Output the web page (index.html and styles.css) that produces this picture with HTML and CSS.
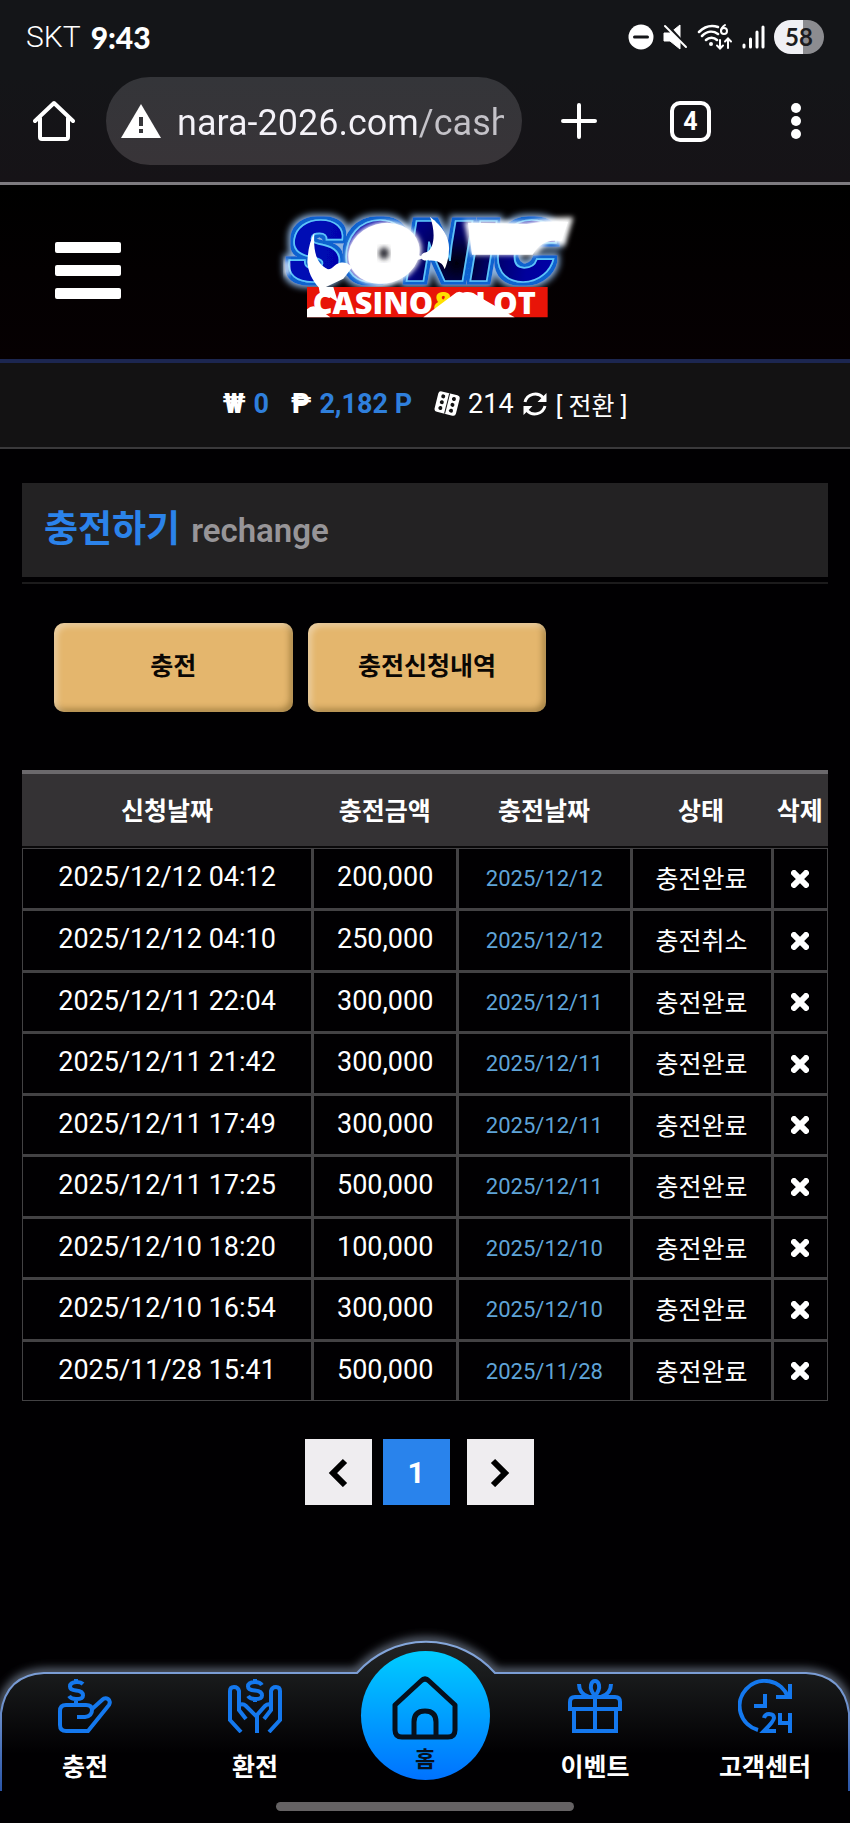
FILE: index.html
```html
<!DOCTYPE html>
<html lang="ko">
<head>
    <meta charset="UTF-8">
    <meta name="viewport" content="width=device-width, initial-scale=1.0">
    <title>충전하기</title>
    <link rel="stylesheet" href="styles.css">
</head>
<body>
    <!-- reusable icons -->
    <svg class="sprite" aria-hidden="true">
        <symbol id="icon-x" viewBox="0 0 18 18">
            <path d="M2 2l14 14M16 2L2 16" stroke="#fff" stroke-width="5"/>
            <path d="M3 3l12 12M15 3L3 15" stroke="#fff" stroke-width="6" stroke-linecap="round"/>
        </symbol>
    </svg>

    <div class="status-bar">
        <span class="carrier">SKT</span>
        <span class="clock">9:43</span>
        <div class="status-icons">
            <svg width="26" height="26" viewBox="0 0 26 26">
                <circle cx="13" cy="13" r="12.500" fill="#fff"/>
                <path d="M6.500 13h13" stroke="#141518" stroke-width="3" stroke-linecap="round"/>
            </svg>
            <svg width="25" height="26" viewBox="0 0 25 26">
                <path d="M1 9h6L17 1v24L7 17H1z" fill="#fff" stroke="#fff" stroke-linejoin="round"/>
                <path d="M4 1l20 22" stroke="#141518" stroke-width="3"/>
                <path d="M2 2l21 21" stroke="#fff" stroke-width="2" stroke-linecap="round"/>
            </svg>
            <svg width="36" height="28" viewBox="0 0 36 28">
                <g fill="none" stroke="#fff" stroke-width="2.500" stroke-linecap="round">
                    <path d="M2 9C8 3 15 2 21 4M5 13c5-5 11-5.500 16-2M9 17c3-3 8-3 11 0"/>
                    <path d="M23 17v8M20 22.500l3 3 3-3M31 25v-9M28 18.500l3-3 3 3" stroke-width="2"/>
                    <path d="M28 2c-3 2-4 4-4 6" stroke-width="2"/>
                    <circle cx="27" cy="8" r="3" stroke-width="2"/>
                </g>
                <circle cx="14" cy="21" r="2" fill="#fff"/>
            </svg>
            <svg width="23" height="24" viewBox="0 0 23 24">
                <path d="M2 20v2M8.500 14v8M15 7v15M21 2v20" stroke="#fff" stroke-width="3" stroke-linecap="round"/>
            </svg>
            <span class="battery">58</span>
        </div>
    </div>

    <div class="browser-bar">
        <button class="bar-btn" aria-label="Home">
            <svg width="42" height="42" viewBox="0 0 42 42">
                <path d="M2 21L21 3l19 18M7 18v19q0 2 2 2h24q2 0 2-2V18" fill="none" stroke="#fff" stroke-width="4" stroke-linejoin="round" stroke-linecap="round"/>
            </svg>
        </button>
        <div class="url-pill">
            <svg width="42" height="36" viewBox="0 0 42 36">
                <path d="M21 1l20 34H1z" fill="#fff"/>
                <path d="M21 14v9M21 26v4" stroke="#36363a" stroke-width="4"/>
            </svg>
            <input type="text" class="url-text" value="nara-2026.com/cash" aria-label="Address">
        </div>
        <button class="bar-btn" aria-label="New tab">
            <svg width="36" height="36" viewBox="0 0 36 36">
                <path d="M18 2v32M2 18h32" stroke="#fff" stroke-width="4" stroke-linecap="round"/>
            </svg>
        </button>
        <button class="bar-btn tabs-btn" aria-label="Tabs"><span class="tab-count">4</span></button>
        <button class="bar-btn" aria-label="Menu">
            <svg width="10" height="38" viewBox="0 0 10 38">
                <circle cx="5" cy="6" r="5" fill="#fff"/>
                <circle cx="5" cy="19" r="5" fill="#fff"/>
                <circle cx="5" cy="32" r="5" fill="#fff"/>
            </svg>
        </button>
    </div>

    <header class="site-header">
        <button class="menu-toggle" aria-label="메뉴">
            <span></span>
            <span></span>
            <span></span>
        </button>
        <a href="#" class="logo" aria-label="Sonic Casino &amp; Slot">
            <svg width="340" height="130" viewBox="-15 0 1020 390">
                <defs>
                    <radialGradient id="navy" gradientUnits="userSpaceOnUse" cx="590" cy="190" r="420">
                        <stop offset="0" stop-color="#00000c"/>
                        <stop offset="0.2" stop-color="#00005c"/>
                        <stop offset="0.5" stop-color="#00009c"/>
                        <stop offset="1" stop-color="#0008b4"/>
                    </radialGradient>
                    <filter id="soft" x="-15%" y="-25%" width="130%" height="150%"><feGaussianBlur stdDeviation="8"/></filter>
                    <!-- blue outline with a pale halo behind the word -->
                    <filter id="neon" x="-10%" y="-30%" width="120%" height="160%">
                        <feMorphology in="SourceAlpha" operator="dilate" radius="10" result="wide"/>
                        <feFlood flood-color="#0c62cf"/>
                        <feComposite in2="wide" operator="in" result="outline"/>
                        <feMorphology in="SourceAlpha" operator="dilate" radius="14" result="wider"/>
                        <feFlood flood-color="#8db4e0"/>
                        <feComposite in2="wider" operator="in"/>
                        <feGaussianBlur stdDeviation="10" result="halo"/>
                        <feMerge>
                            <feMergeNode in="halo"/>
                            <feMergeNode in="outline"/>
                            <feMergeNode in="SourceGraphic"/>
                        </feMerge>
                    </filter>
                </defs>
                <text class="logo-word" x="82" y="243" fill="url(#navy)" stroke="#5cc4fa" stroke-width="5" filter="url(#neon)">SONIC</text>
                <path d="M74 180l14 2v42l-14 2z" fill="#fff" filter="url(#soft)"/>
                <g fill="#fff">
                    <path d="M163 98C160 150 166 190 204 208C222 206 222 192 240 188C262 184 268 196 278 200L250 236L196 262H176C156 240 144 214 142 186C144 150 150 120 163 98z"/>
                    <g filter="url(#soft)"><ellipse cx="372" cy="160" rx="114" ry="94" transform="rotate(-16 372 160)"/></g>
                    <ellipse cx="372" cy="160" rx="108" ry="90" transform="rotate(-16 372 160)"/>
                    <path d="M465 160l18 8c4-10 14-12 22-12l6 20c-10 8-22 6-26 0l-20 6z"/>
                    <path d="M510 50C556 86 572 120 566 160C564 184 558 198 554 208C548 188 532 180 506 182L498 158C526 146 526 90 510 50z"/>
                    <path d="M612 62L800 66Q860 52 940 52L914 138L872 126Q846 134 830 164H634z" filter="url(#soft)"/>
                    <path d="M624 68L800 72Q860 62 924 66L904 124Q850 112 818 164H636z"/>
                </g>
                <ellipse cx="372" cy="160" rx="15" ry="18" fill="#33333a" filter="url(#soft)"/>
                <path d="M141 261H863V352H141z" fill="#e81408"/>
                <text class="logo-tag" x="158" y="341" fill="#fff">CASINO<tspan fill="#ffe000">&amp;</tspan>SLOT</text>
                <g fill="#fff">
                    <path d="M176 261h44l14 46-30-20-22 6z"/>
                    <path d="M141 352v-24q12-12 26-8l44 32z"/>
                    <path d="M490 352L580 284q18-18 36 0l28-2 34 20 86 50z"/>
                </g>
            </svg>
        </a>
    </header>

    <div class="balance">
        <span class="won">₩</span>
        <span class="amount">0</span>
        <span class="peso">₱</span>
        <span class="amount">2,182 P</span>
        <svg class="dice" width="26" height="26" viewBox="0 0 26 26">
            <g transform="rotate(14 13 13)">
                <rect x="2" y="2" width="22" height="21" rx="3" fill="#fff"/>
                <path d="M13 2v21" stroke="#131213"/>
                <g fill="#131213">
                    <circle cx="7.500" cy="6.500" r="2"/><circle cx="7.500" cy="12.500" r="2"/><circle cx="7.500" cy="18.500" r="2"/>
                    <circle cx="18.500" cy="6.500" r="2"/><circle cx="18.500" cy="12.500" r="2"/><circle cx="18.500" cy="18.500" r="2"/>
                </g>
            </g>
        </svg>
        <span>214</span>
        <svg width="26" height="26" viewBox="0 0 26 26">
            <g fill="none" stroke="#fff" stroke-width="3">
                <path d="M3 11A10.500 10.500 0 0 1 21 6.500M23 15A10.500 10.500 0 0 1 5 19.500"/>
            </g>
            <path d="M24.500 2v9h-9zM1.500 24v-9h9z" fill="#fff"/>
        </svg>
        <a href="#" class="convert">[ 전환 ]</a>
    </div>

    <main class="content">
        <h1 class="page-title">충전하기 <small>rechange</small></h1>

        <div class="actions">
            <button>충전</button>
            <button>충전신청내역</button>
        </div>

        <table class="history">
            <colgroup>
                <col class="col-requested">
                <col class="col-amount">
                <col class="col-date">
                <col class="col-status">
                <col class="col-delete">
            </colgroup>
            <thead>
                <tr><th>신청날짜</th><th>충전금액</th><th>충전날짜</th><th>상태</th><th>삭제</th></tr>
            </thead>
            <tbody>
                <tr><td>2025/12/12 04:12</td><td>200,000</td><td class="date">2025/12/12</td><td>충전완료</td><td><button aria-label="삭제"><svg><use href="#icon-x"/></svg></button></td></tr>
                <tr><td>2025/12/12 04:10</td><td>250,000</td><td class="date">2025/12/12</td><td>충전취소</td><td><button aria-label="삭제"><svg><use href="#icon-x"/></svg></button></td></tr>
                <tr><td>2025/12/11 22:04</td><td>300,000</td><td class="date">2025/12/11</td><td>충전완료</td><td><button aria-label="삭제"><svg><use href="#icon-x"/></svg></button></td></tr>
                <tr><td>2025/12/11 21:42</td><td>300,000</td><td class="date">2025/12/11</td><td>충전완료</td><td><button aria-label="삭제"><svg><use href="#icon-x"/></svg></button></td></tr>
                <tr><td>2025/12/11 17:49</td><td>300,000</td><td class="date">2025/12/11</td><td>충전완료</td><td><button aria-label="삭제"><svg><use href="#icon-x"/></svg></button></td></tr>
                <tr><td>2025/12/11 17:25</td><td>500,000</td><td class="date">2025/12/11</td><td>충전완료</td><td><button aria-label="삭제"><svg><use href="#icon-x"/></svg></button></td></tr>
                <tr><td>2025/12/10 18:20</td><td>100,000</td><td class="date">2025/12/10</td><td>충전완료</td><td><button aria-label="삭제"><svg><use href="#icon-x"/></svg></button></td></tr>
                <tr><td>2025/12/10 16:54</td><td>300,000</td><td class="date">2025/12/10</td><td>충전완료</td><td><button aria-label="삭제"><svg><use href="#icon-x"/></svg></button></td></tr>
                <tr><td>2025/11/28 15:41</td><td>500,000</td><td class="date">2025/11/28</td><td>충전완료</td><td><button aria-label="삭제"><svg><use href="#icon-x"/></svg></button></td></tr>
            </tbody>
        </table>

        <div class="pagination">
            <button aria-label="이전">
                <svg width="20" height="30" viewBox="0 0 20 30"><path d="M17 4L5 16l12 12" fill="none" stroke="#000" stroke-width="6"/></svg>
            </button>
            <button class="current">1</button>
            <button aria-label="다음">
                <svg width="20" height="30" viewBox="0 0 20 30"><path d="M3 4l12 12L3 28" fill="none" stroke="#000" stroke-width="6"/></svg>
            </button>
        </div>
    </main>

    <nav class="bottom-nav">
        <svg class="nav-shape" viewBox="0 0 850 183" preserveAspectRatio="none" aria-hidden="true">
            <defs>
                <linearGradient id="navFill" x1="0" y1="0" x2="0" y2="1">
                    <stop offset="0" stop-color="#222325"/>
                    <stop offset="0.2" stop-color="#1a1c1d"/>
                    <stop offset="0.750" stop-color="#010002"/>
                </linearGradient>
                <linearGradient id="navLine" gradientUnits="userSpaceOnUse" x1="0" y1="0" x2="0" y2="150">
                    <stop offset="0" stop-color="#86a8dc"/>
                    <stop offset="0.4" stop-color="#7194cf"/>
                    <stop offset="1" stop-color="#2a55a8"/>
                </linearGradient>
                <filter id="navGlow" x="-5%" y="-20%" width="110%" height="140%"><feGaussianBlur stdDeviation="5"/></filter>
            </defs>
            <path d="M1 92V72Q6 34 44 32H357A92 92 0 0 1 495 32H806Q844 34 849 72V92" fill="none" stroke="#6d7889" stroke-width="8" filter="url(#navGlow)"/>
            <path d="M1 150V72Q6 34 44 32H357A92 92 0 0 1 495 32H806Q844 34 849 72V150" fill="url(#navFill)" stroke="url(#navLine)" stroke-width="2"/>
        </svg>
        <a href="#">
            <svg class="nav-icon" viewBox="0 0 54 54">
                <path d="M25 5Q23 3 19 3Q12 3 12 7.500Q12 11 18 11.500Q25 12 25 16.500Q25 20 18 20Q13 20 11 17M18 0v3M18 20v5"/>
                <path d="M19 38h8q7-1 7-7 0-5-6-5H8q-6 0-6 6v14q0 6 6 6h22l21-26q2-4-1-6t-6 1L33 31"/>
            </svg>
            <span>충전</span>
        </a>
        <a href="#">
            <svg class="nav-icon" viewBox="0 0 54 54">
                <path d="M34 6Q32 3 27 3Q20 3 20 7.500Q20 11 27 11.500Q34 12 34 16.500Q34 20 27 20Q22 20 20 17M27 0v3M27 20v3"/>
                <path d="M13 53L2 41V12q0-4 4-4t5 4v19l7 9M11 26q4-2 7 1l10 10 9-10q3-3 7-1M29 36v18M41 53l11-12V12q0-4-4-4t-5 4v19l-7 9"/>
            </svg>
            <span>환전</span>
        </a>
        <a href="#" class="home">
            <svg width="66" height="66" viewBox="0 0 66 66">
                <path d="M3 30L29 6q4-4 8 0l26 24v25q0 7-7 7H10q-7 0-7-7zM22 62V47q0-11 11-11t11 11v15" fill="none" stroke="#06101c" stroke-width="5" stroke-linejoin="round"/>
            </svg>
            <span>홈</span>
        </a>
        <a href="#">
            <svg class="nav-icon" viewBox="0 0 54 54">
                <path d="M2 30v-7q0-5 5-5h40q5 0 5 5v7zM6 30v22h42V30M27 18v34M11 5q0 10 10 13M43 5q0 10-10 13M27 17q-5-6-4-11 1-4 4-4t4 4q1 5-4 11z"/>
            </svg>
            <span>이벤트</span>
        </a>
        <a href="#">
            <svg class="nav-icon" viewBox="0 0 54 54">
                <path d="M20 51A25 25 0 1 1 50 18M52 5v13H38M27 15v12H16M26 39q1-4 5-4 5 0 5 4 0 3-10 13h12M42 34v10h10M52 34v20"/>
            </svg>
            <span>고객센터</span>
        </a>
    </nav>
    <div class="gesture-bar"><span></span></div>
</body>
</html>
```
FILE: styles.css
```css
* {
    box-sizing: border-box;
}
body {
    margin: 0;
    background: #010002;
    color: #fff;
    font-family: Roboto, "Noto Sans CJK KR", sans-serif;
    font-size: 27px;
}
button {
    border: 0;
    padding: 0;
    background: none;
    font-family: inherit;
    color: inherit;
}
a {
    color: inherit;
    text-decoration: none;
}
svg {
    display: block;
}
.sprite {
    position: absolute;
    width: 0;
    height: 0;
}

/* phone status bar */
.status-bar {
    display: flex;
    align-items: center;
    gap: 10px;
    height: 77px;
    padding: 0 26px 4px;
    background: #141518;
}
.carrier {
    font-size: 30px;
    font-weight: 300;
}
.clock {
    font-family: Lato, sans-serif;
    font-size: 30px;
    font-weight: 900;
}
.status-icons {
    display: flex;
    align-items: center;
    gap: 9px;
    margin-left: auto;
}
.battery {
    width: 50px;
    height: 34px;
    border-radius: 17px;
    background: linear-gradient(to right, #f0f0f4 58%, #8c8c90 58%);
    color: #1c1c20;
    font-family: Lato, sans-serif;
    font-size: 24px;
    font-weight: 700;
    line-height: 34px;
    text-align: center;
}

/* browser toolbar */
.browser-bar {
    display: flex;
    align-items: flex-start;
    height: 108px;
    padding: 0 49px 0 33px;
    background: linear-gradient(#141518, #161317);
    border-bottom: 3px solid #7d7b80;
}
.bar-btn {
    display: flex;
    flex: none;
    align-items: center;
    justify-content: center;
    height: 88px;
}
.url-pill {
    display: flex;
    align-items: center;
    flex: 1;
    gap: 15px;
    min-width: 0;
    height: 88px;
    margin: 0 39px 0 31px;
    padding: 0 18px 0 14px;
    border-radius: 44px;
    background: linear-gradient(#343539, #383438);
}
.url-pill svg {
    flex: none;
}
.url-text {
    flex: 1;
    min-width: 0;
    padding: 4px 0 0;
    border: 0;
    background: linear-gradient(to right, #f4f2f8 240px, #c4c2c8 240px);
    -webkit-background-clip: text;
    background-clip: text;
    color: transparent;
    font-family: inherit;
    font-size: 36px;
}
.tabs-btn {
    margin: 0 80px 0 73px;
}
.tab-count {
    width: 41px;
    height: 41px;
    border: 4px solid #fff;
    border-radius: 10px;
    font-size: 25px;
    font-weight: 700;
    line-height: 33px;
}

/* site header */
.site-header {
    display: grid;
    grid-template-columns: 1fr auto 1fr;
    align-items: center;
    height: 174px;
    padding: 0 55px 4px;
    background: linear-gradient(#000, #060002);
}
.menu-toggle {
    display: flex;
    flex-direction: column;
    gap: 12px;
    width: 66px;
}
.menu-toggle span {
    width: 100%;
    height: 11px;
    border-radius: 2px;
    background: #fff;
}
.logo {
    margin-bottom: 10px;
}
.logo-word {
    font-family: Inter, sans-serif;
    font-size: 248px;
    font-weight: 900;
    font-style: italic;
}
.logo-tag {
    font-family: "Open Sans", sans-serif;
    font-size: 92px;
    font-weight: 800;
}

.balance {
    display: flex;
    align-items: center;
    justify-content: center;
    gap: 8px;
    height: 90px;
    padding-bottom: 2px;
    border-top: 4px solid #1c2650;
    border-bottom: 2px solid #3a393b;
    background: #131213;
}
.balance .amount {
    color: #2f7fdc;
    font-weight: 700;
}
.won,
.peso {
    font-weight: 900;
}
.peso,
.dice {
    margin-left: 14px;
}
.convert {
    font-size: 25px;
}

/* page */
.content {
    padding: 34px 22px 0;
}
.page-title {
    position: relative;
    display: flex;
    align-items: baseline;
    gap: 11px;
    height: 94px;
    margin: 0;
    padding: 0 22px;
    background: #232223;
    color: #2b83ea;
    font-size: 37px;
    font-weight: 700;
    line-height: 94px;
}
.page-title::after {
    content: "";
    position: absolute;
    left: 0;
    right: 0;
    bottom: -7px;
    height: 2px;
    background: #1c1b1c;
}
.page-title small {
    color: #979598;
    font-size: 33px;
    font-weight: 600;
}
.actions {
    display: flex;
    gap: 15px;
    padding: 46px 28px 58px 32px;
}
.actions button {
    width: 32%;
    height: 89px;
    padding-bottom: 8px;
    border-radius: 10px;
    background: #e4b66d;
    box-shadow: inset 3px 3px 6px rgba(255, 255, 255, 0.4), inset -3px -3px 6px rgba(70, 50, 0, 0.4);
    color: #0a0704;
    font-size: 25px;
    font-weight: 700;
}

.history {
    width: 100%;
    table-layout: fixed;
    border-collapse: separate;
    border-spacing: 0;
    border-top: 4px solid #6b696c;
    text-align: center;
}
.col-requested { width: 36%; }
.col-amount { width: 18%; }
.col-status { width: 17.5%; }
.col-delete { width: 7%; }
.history th {
    height: 74px;
    padding: 0 0 2px;
    border-bottom: 2px solid #0a090a;
    background: #343234;
    font-size: 25px;
    white-space: nowrap;
}
.history td {
    height: 61px;
    padding: 0 0 3px;
    border: 1px solid #434244;
}
.history tr:nth-child(even) td {
    height: 62px;
}
.history td + td {
    border-left-width: 2px;
}
.history tr + tr td {
    border-top-width: 2px;
}
.history td:nth-child(4) {
    font-size: 25px;
}
.history .date {
    padding: 0;
    color: #5fa4d8;
    font-size: 22px;
}
.history button {
    vertical-align: middle;
}
.history svg {
    width: 18px;
    height: 18px;
}

.pagination {
    display: flex;
    justify-content: center;
    gap: 11px;
    padding: 38px 12px 136px 0;
}
.pagination button {
    display: flex;
    align-items: center;
    justify-content: center;
    width: 67px;
    height: 66px;
    background: #efedf0;
}
.pagination .current {
    margin-right: 6px;
    background: #2983ec;
    font-size: 30px;
    font-weight: 700;
}

/* bottom navigation */
.bottom-nav {
    position: relative;
    display: grid;
    grid-template-columns: repeat(5, 1fr);
    height: 150px;
}
.nav-shape {
    position: absolute;
    left: 0;
    top: 0;
    width: 100%;
    height: 183px;
    overflow: visible;
}
.bottom-nav a {
    position: relative;
    display: flex;
    flex-direction: column;
    align-items: center;
    gap: 16px;
    padding-top: 38px;
    font-size: 25px;
    font-weight: 700;
    line-height: 38px;
}
.nav-icon {
    width: 54px;
    height: 54px;
    fill: none;
    stroke: #1478ee;
    stroke-width: 4;
}
.bottom-nav .home {
    justify-self: center;
    gap: 0;
    width: 129px;
    height: 129px;
    margin-top: 10px;
    padding-top: 24px;
    border-radius: 50%;
    background: linear-gradient(#00ccff, #0072ff);
    color: #06101c;
    font-size: 22px;
}
.gesture-bar {
    position: relative;
    display: flex;
    justify-content: center;
    padding: 11px 0 12px;
}
.gesture-bar span {
    width: 35%;
    height: 9px;
    border-radius: 5px;
    background: #656264;
}
```
